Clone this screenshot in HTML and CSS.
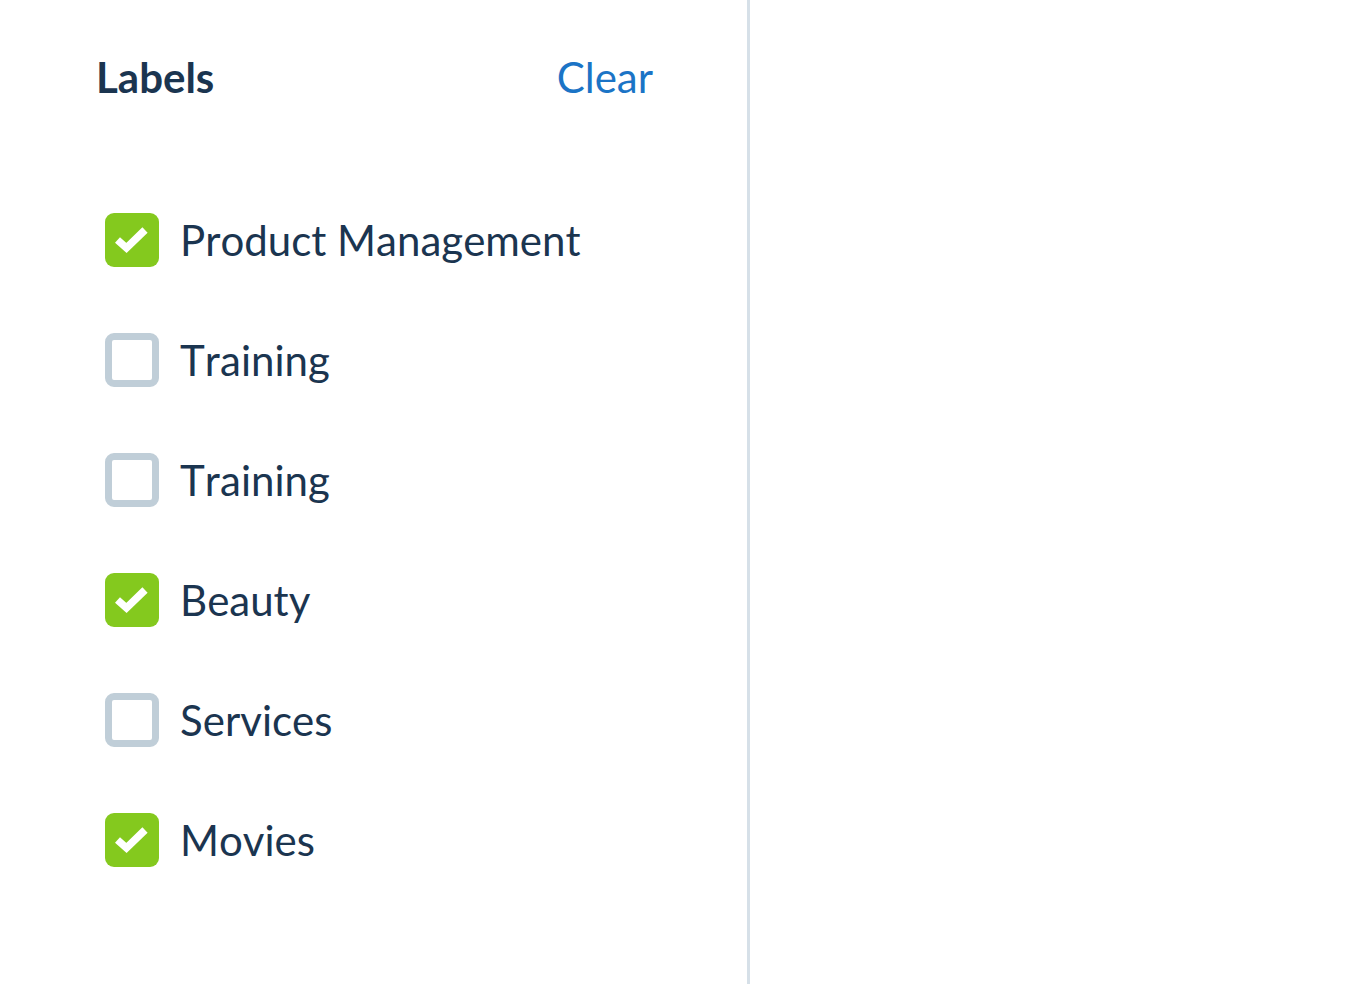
FILE: index.html
```html
<!DOCTYPE html>
<html>
<head>
<meta charset="utf-8">
<link rel="stylesheet" href="styles.css">
</head>
<body>
<div class="page">
  <aside class="sidebar">
    <div class="header">
      <h2 class="title">Labels</h2>
      <a class="clear">Clear</a>
    </div>
    <ul class="list">
      <li class="item"><span class="box checked"><svg viewBox="0 0 54 54" width="54" height="54"><path d="M12.5 27 L21.5 35 L40 17" fill="none" stroke="#fff" stroke-width="7.5"/></svg></span><span class="label">Product Management</span></li>
      <li class="item"><span class="box"></span><span class="label">Training</span></li>
      <li class="item"><span class="box"></span><span class="label">Training</span></li>
      <li class="item"><span class="box checked"><svg viewBox="0 0 54 54" width="54" height="54"><path d="M12.5 27 L21.5 35 L40 17" fill="none" stroke="#fff" stroke-width="7.5"/></svg></span><span class="label">Beauty</span></li>
      <li class="item"><span class="box"></span><span class="label">Services</span></li>
      <li class="item"><span class="box checked"><svg viewBox="0 0 54 54" width="54" height="54"><path d="M12.5 27 L21.5 35 L40 17" fill="none" stroke="#fff" stroke-width="7.5"/></svg></span><span class="label">Movies</span></li>
    </ul>
  </aside>
  <main class="content"></main>
</div>
</body>
</html>
```
FILE: styles.css
```css
* { box-sizing: border-box; }
html, body { margin: 0; padding: 0; background: #fff; }
body { font-family: Lato, "Open Sans", sans-serif; color: #1b3550; font-kerning: none; }
.page { display: flex; height: 984px; }
.sidebar {
  width: 750px;
  border-right: 3px solid #d6e0e8;
  padding: 52px 94px 0 96px;
}
.header {
  display: flex;
  justify-content: space-between;
  align-items: center;
  height: 50px;
}
.title { margin: 0; font-size: 42px; font-weight: 700; line-height: 50px; color: #1b3550; }
.clear { font-size: 42px; line-height: 50px; color: #1b74c6; cursor: pointer; }
.list {
  list-style: none;
  margin: 111px 0 0 0;
  padding: 0 0 0 9px;
  display: flex;
  flex-direction: column;
  gap: 66px;
}
.item { display: flex; align-items: center; height: 54px; gap: 21px; }
.box {
  width: 54px; height: 54px;
  border-radius: 9px;
  border: 7px solid #c0ced8;
  background: #fff;
  flex: none;
}
.box.checked { border: none; background: #84c91e; }
.box svg { display: block; }
.label { font-size: 42px; line-height: 54px; color: #1b3550; }
.content { flex: 1; }
```
